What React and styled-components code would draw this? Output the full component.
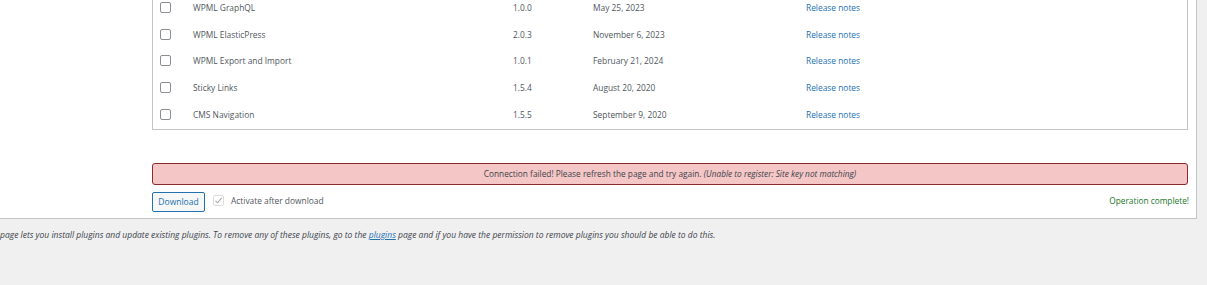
import React from "react";
import styled, { createGlobalStyle } from "styled-components";

const Global = createGlobalStyle`
  html, body { margin: 0; padding: 0; background: #f0f0f1; }
  body { font-family: "Open Sans", "Noto Sans", sans-serif; color: #3c434a; overflow: hidden; }
`;

const Panel = styled.div`
  width: 1197px;
  height: 219px;
  background: #fff;
  border-right: 1px solid #c3c4c7;
  border-bottom: 1px solid #c3c4c7;
  padding: 0 8px 0 152px;
  box-sizing: border-box;
  display: flex;
  flex-direction: column;
`;

const Table = styled.div`
  margin-top: -6px;
  border: 1px solid #c3c4c7;
  border-top: none;
  padding-bottom: 1px;
`;

const Row = styled.div`
  display: grid;
  grid-template-columns: 40px 320px 80px 213px 1fr;
  align-items: center;
  height: 26.75px;
  font-size: 8.4px;
  color: #50575e;
`;

const CheckCell = styled.div`
  padding-left: 7px;
  display: flex;
  align-items: center;
`;

const Box = styled.span`
  display: inline-flex;
  align-items: center;
  justify-content: center;
  width: 11px;
  height: 11px;
  box-sizing: border-box;
  border: 1px solid ${(p) => (p.$disabled ? "#dcdcde" : "#8c8f94")};
  border-radius: 2px;
  background: #fff;
`;

const Link = styled.a`
  color: #2271b1;
  text-decoration: none;
`;

const Notice = styled.div`
  margin-top: 33px;
  height: 22px;
  box-sizing: border-box;
  background: #f5c6c6;
  border: 1px solid #8a2a2a;
  border-radius: 3px;
  display: flex;
  align-items: center;
  justify-content: center;
  font-size: 8.3px;
  color: #3c434a;
`;

const Actions = styled.div`
  margin-top: 7px;
  display: flex;
  align-items: center;
`;

const Button = styled.button`
  height: 20px;
  width: 53px;
  padding: 0;
  border: 1px solid #2271b1;
  border-radius: 2px;
  background: #f6f7f7;
  color: #2271b1;
  font-family: inherit;
  font-size: 8.5px;
  box-sizing: border-box;
`;

const ActivateLabel = styled.label`
  margin-left: 8px;
  display: flex;
  align-items: center;
  gap: 7px;
  font-size: 8.4px;
  color: #50575e;
  margin-top: -3px;
`;

const Success = styled.span`
  margin-left: auto;
  margin-right: -1px;
  margin-top: -3px;
  font-size: 8.3px;
  color: #18771f;
`;

const Footer = styled.p`
  margin: 10px 0 0 0;
  font-size: 8.5px;
  font-style: italic;
  color: #3c434a;
  white-space: nowrap;
  a { color: #2271b1; text-decoration: underline; }
`;

const rows = [
  ["WPML GraphQL", "1.0.0", "May 25, 2023"],
  ["WPML ElasticPress", "2.0.3", "November 6, 2023"],
  ["WPML Export and Import", "1.0.1", "February 21, 2024"],
  ["Sticky Links", "1.5.4", "August 20, 2020"],
  ["CMS Navigation", "1.5.5", "September 9, 2020"],
];

export default function App() {
  return (
    <>
      <Global />
      <Panel>
        <Table>
          {rows.map(([name, ver, date]) => (
            <Row key={name}>
              <CheckCell>
                <Box />
              </CheckCell>
              <span>{name}</span>
              <span>{ver}</span>
              <span>{date}</span>
              <span>
                <Link href="#">Release notes</Link>
              </span>
            </Row>
          ))}
        </Table>
        <Notice>
          Connection failed! Please refresh the page and try again.&nbsp;
          <i>(Unable to register: Site key not matching)</i>
        </Notice>
        <Actions>
          <Button>Download</Button>
          <ActivateLabel>
            <Box $disabled>
              <svg width="9" height="9" viewBox="0 0 9 9">
                <path d="M1.5 4.8 L3.6 6.8 L7.6 1.8" fill="none" stroke="#a7aaad" strokeWidth="1.1" />
              </svg>
            </Box>
            Activate after download
          </ActivateLabel>
          <Success>Operation complete!</Success>
        </Actions>
      </Panel>
      <Footer>
        page lets you install plugins and update existing plugins. To remove any of these plugins, go to the{" "}
        <a href="#">plugins</a> page and if you have the permission to remove plugins you should be able to do this.
      </Footer>
    </>
  );
}
